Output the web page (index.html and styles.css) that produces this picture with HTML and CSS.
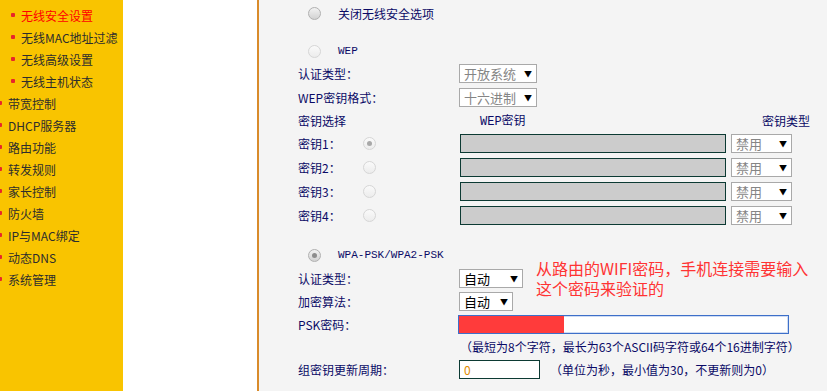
FILE: index.html
```html
<!DOCTYPE html>
<html lang="zh-CN">
<head>
<meta charset="utf-8">
<title>无线安全设置</title>
<link rel="stylesheet" href="styles.css">
</head>
<body>
<div class="page">
  <nav class="sidebar">
    <ul class="menu">
      <li class="sub active">无线安全设置</li>
      <li class="sub">无线MAC地址过滤</li>
      <li class="sub">无线高级设置</li>
      <li class="sub">无线主机状态</li>
      <li class="top">带宽控制</li>
      <li class="top">DHCP服务器</li>
      <li class="top">路由功能</li>
      <li class="top">转发规则</li>
      <li class="top">家长控制</li>
      <li class="top">防火墙</li>
      <li class="top">IP与MAC绑定</li>
      <li class="top">动态DNS</li>
      <li class="top">系统管理</li>
    </ul>
  </nav>
  <div class="gutter"></div>
  <main class="content">
    <div class="radio-row r-off"><span class="radio strong"></span><span class="opt">关闭无线安全选项</span></div>

    <div class="radio-row r-wep"><span class="radio faint"></span><span class="opt mono">WEP</span></div>
    <div class="row h23"><span class="label">认证类型：</span><div class="select dim w78"><span>开放系统</span><i>▼</i></div></div>
    <div class="row h24"><span class="label">WEP密钥格式：</span><div class="select dim w78"><span>十六进制</span><i>▼</i></div></div>
    <div class="row h22 key-head"><span class="label">密钥选择</span><span class="col-wep">WEP密钥</span><span class="col-type">密钥类型</span></div>
    <div class="row h24"><span class="label"><span class="klabel">密钥1：</span><span class="radio faint checked"></span></span><div class="keybox"></div><div class="select dim w60"><span>禁用</span><i>▼</i></div></div>
    <div class="row h24"><span class="label"><span class="klabel">密钥2：</span><span class="radio faint"></span></span><div class="keybox"></div><div class="select dim w60"><span>禁用</span><i>▼</i></div></div>
    <div class="row h24"><span class="label"><span class="klabel">密钥3：</span><span class="radio faint"></span></span><div class="keybox"></div><div class="select dim w60"><span>禁用</span><i>▼</i></div></div>
    <div class="row h24"><span class="label"><span class="klabel">密钥4：</span><span class="radio faint"></span></span><div class="keybox"></div><div class="select dim w60"><span>禁用</span><i>▼</i></div></div>

    <div class="radio-row r-wpa"><span class="radio strong checked"></span><span class="opt mono">WPA-PSK/WPA2-PSK</span></div>
    <div class="row h22"><span class="label">认证类型：</span><div class="select w64"><span>自动</span><i>▼</i></div></div>
    <div class="row h24"><span class="label">加密算法：</span><div class="select w54"><span>自动</span><i>▼</i></div></div>
    <div class="row h23"><span class="label">PSK密码：</span><div class="pskbox"><div class="psk-fill"></div></div></div>
    <div class="row h21"><span class="label"></span><span class="hint">（最短为8个字符，最长为63个ASCII码字符或64个16进制字符）</span></div>
    <div class="row h24"><span class="label">组密钥更新周期：</span><div class="numbox">0</div><span class="hint hint2">（单位为秒，最小值为30，不更新则为0）</span></div>

    <div class="note">从路由的WIFI密码，手机连接需要输入<br>这个密码来验证的</div>
  </main>
</div>
</body>
</html>
```

FILE: styles.css
```css
* { box-sizing: border-box; }
html, body { margin: 0; padding: 0; }
body {
  width: 827px;
  height: 391px;
  overflow: hidden;
  font-family: "Noto Sans CJK SC", "Noto Sans", sans-serif;
  font-size: 12px;
  background: #fff;
}
.page {
  display: grid;
  grid-template-columns: 123px 134px 1fr;
  height: 391px;
}
.sidebar { background: #F9C400; overflow: hidden; }
.gutter { background: #fff; }
.menu { list-style: none; margin: 0; padding: 4px 0 0 0; }
.menu li {
  display: flex;
  align-items: center;
  height: 22px;
  color: #2d2d2d;
  font-size: 12px;
  white-space: nowrap;
}
.menu li::before {
  content: "";
  width: 4px;
  height: 4px;
  border-radius: 1px;
  background: #E8262A;
  margin-right: 6px;
  flex: none;
}
.menu li.sub { padding-left: 11px; }
.menu li.top::before { margin-left: -2px; }
.menu li.active { color: #FF0000; }

.content {
  position: relative;
  background: #F4F4F4;
  border-left: 2px solid #D98B2B;
  padding-top: 1px;
  color: #0a0a66;
}
.radio-row {
  display: flex;
  align-items: center;
  height: 24px;
  padding-left: 49px;
}
.radio-row .opt { margin-left: 17px; }
.r-wep { height: 22px; margin-top: 15px; }
.r-wpa { margin-top: 16px; }
.mono { font-family: "Liberation Mono", "Noto Sans CJK SC", monospace; font-size: 11px; }

.radio {
  position: relative;
  display: inline-block;
  flex: none;
  width: 13px;
  height: 13px;
  border-radius: 50%;
  border: 1px solid #c4c4c4;
  background: linear-gradient(#ffffff, #e2e2e2);
}
.radio.strong { border-color: #b0b0b0; background: linear-gradient(#f2f2f2, #d2d2d2); }
.radio.faint { border-color: #d6d6d6; background: linear-gradient(#fafafa, #ececec); }
.radio.checked::after {
  content: "";
  position: absolute;
  left: 3px;
  top: 3px;
  width: 5px;
  height: 5px;
  border-radius: 50%;
  background: #8c8c8c;
}
.radio.faint.checked::after { background: #a8a8a8; }

.row {
  display: flex;
  align-items: center;
  padding-left: 39px;
}
.h21 { height: 21px; }
.h22 { height: 22px; }
.h23 { height: 23px; }
.h24 { height: 24px; }
.label {
  display: flex;
  align-items: center;
  width: 161px;
  flex: none;
  white-space: nowrap;
}
.klabel { width: 65px; }

.key-head .col-wep { margin-left: 21px; font-family: "Liberation Mono", "Noto Sans CJK SC", monospace; }
.key-head .col-wep { width: 282px; }
.key-head .col-type { }

.select {
  display: flex;
  align-items: center;
  justify-content: space-between;
  height: 19px;
  border: 1px solid #a9a9a9;
  background: #fff;
  padding: 0 4px 0 4px;
  font-size: 13px;
  color: #000;
  flex: none;
}
.select i { font-style: normal; font-size: 8px; color: #000; }
.select.dim span { color: #858585; }
.w78 { width: 78px; }
.w60 { width: 61px; margin-left: 5px; }
.w64 { width: 64px; }
.w54 { width: 54px; }

.keybox {
  width: 266px;
  height: 19px;
  margin-left: 1px;
  background: #CCCCCC;
  border: 1px solid #0c3a33;
  flex: none;
}
.pskbox {
  position: relative;
  width: 331px;
  height: 19px;
  margin-left: -1px;
  background: #fff;
  border: 1px solid #3d6fc9;
  box-shadow: inset 0 0 0 1px #cfdcf3;
  flex: none;
}
.psk-fill {
  position: absolute;
  left: 0;
  top: 0;
  bottom: 0;
  width: 105px;
  background: #FF3B3B;
}
.hint { margin-left: 1px; white-space: nowrap; }
.hint2 { margin-left: 10px; }
.numbox {
  width: 81px;
  height: 19px;
  border: 1px solid #0c3a33;
  background: #fff;
  color: #E08A00;
  font-size: 12px;
  line-height: 17px;
  padding-left: 4px;
  flex: none;
}

.note {
  position: absolute;
  left: 277px;
  top: 258px;
  color: #FF3333;
  font-size: 16px;
  line-height: 20px;
  white-space: nowrap;
}
```
